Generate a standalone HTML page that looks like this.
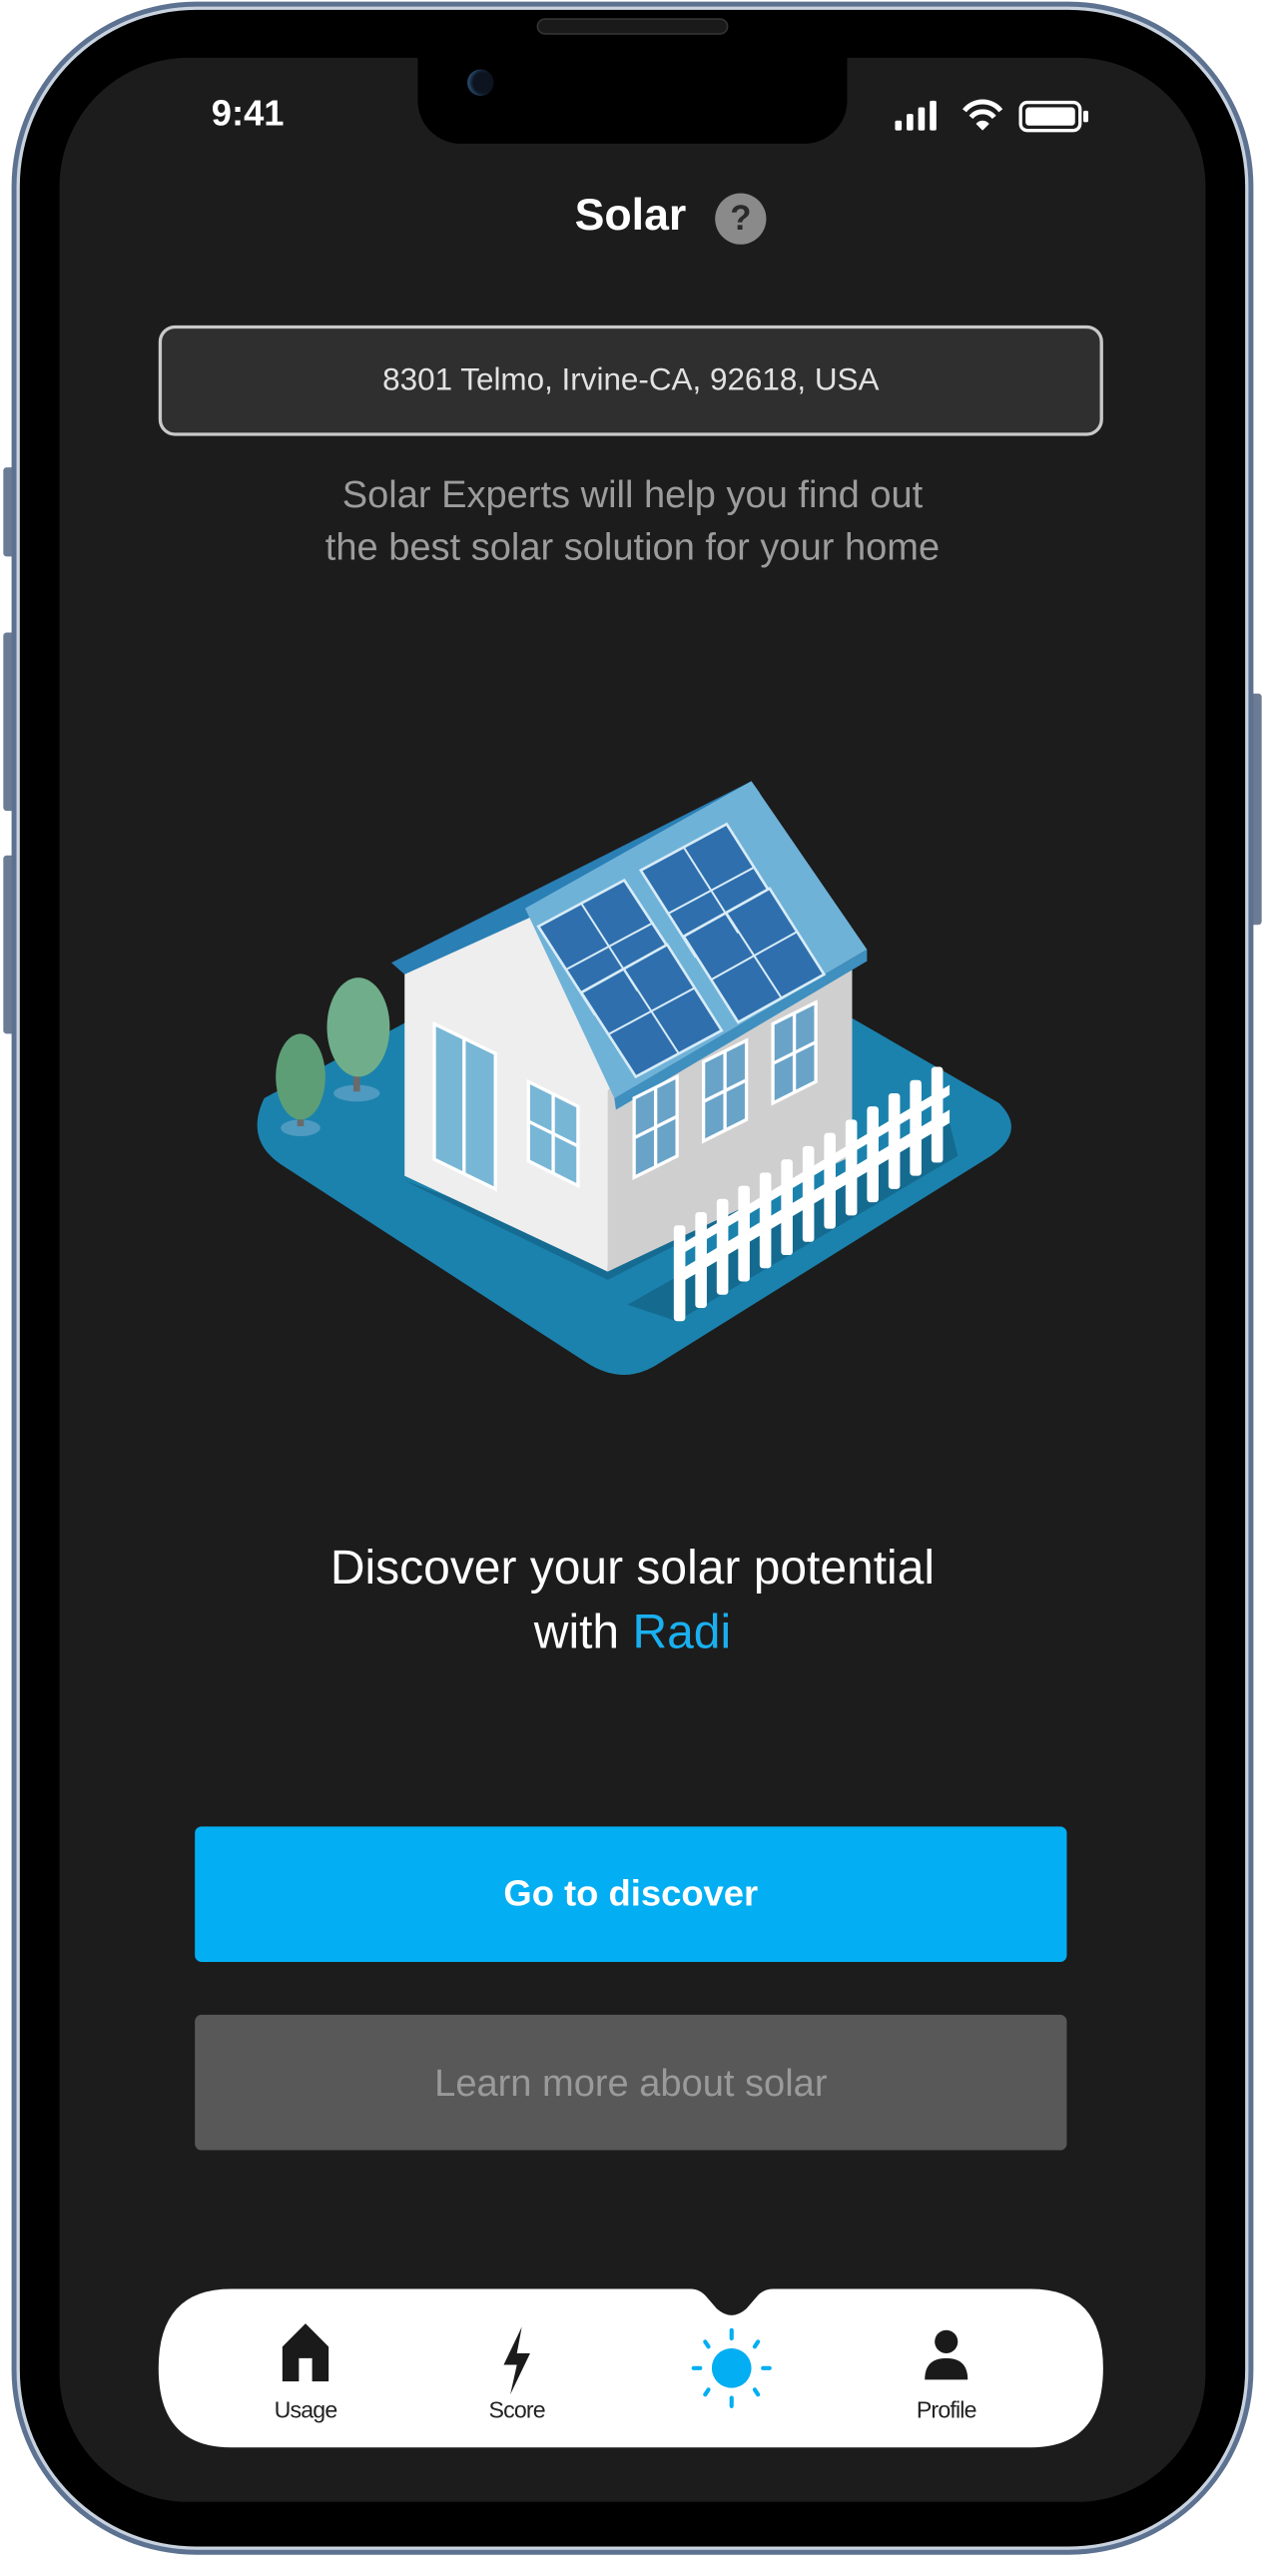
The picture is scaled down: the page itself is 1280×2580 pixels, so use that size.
<!DOCTYPE html>
<html><head><meta charset="utf-8"><style>
*{margin:0;padding:0;box-sizing:border-box}
html,body{width:1280px;height:2580px;overflow:hidden;background:#fff}
#w{position:absolute;left:0;top:0;width:774px;height:1560px;transform:scale(1.654,1.654);transform-origin:0 0;font-family:"Liberation Sans",sans-serif}
.abs{position:absolute}
.c{position:absolute;left:0;width:766px;text-align:center}
</style></head><body><div id="w">
<div class="abs" style="left:2px;top:283px;width:7px;height:54px;background:#6c7c95;border-radius:2px"></div>
<div class="abs" style="left:2px;top:383px;width:7px;height:108px;background:#6c7c95;border-radius:2px"></div>
<div class="abs" style="left:2px;top:518px;width:7px;height:108px;background:#6c7c95;border-radius:2px"></div>
<div class="abs" style="left:757px;top:420px;width:7px;height:140px;background:#6c7c95;border-radius:2px"></div>
<div class="abs" style="left:7px;top:1px;width:752px;height:1546px;border-radius:112px;background:#5d7290;"></div>
<div class="abs" style="left:10px;top:4px;width:746px;height:1540px;border-radius:109px;background:#c9d3e0;"></div>
<div class="abs" style="left:12px;top:6px;width:742px;height:1536px;border-radius:107px;background:#000;"></div>
<div class="abs" style="left:36px;top:35px;width:694px;height:1480px;border-radius:78px;background:#1c1c1c;overflow:hidden"></div>
<div class="abs" style="left:253px;top:30px;width:260px;height:57px;background:#000;border-radius:0 0 26px 26px"></div>
<div class="abs" style="left:325px;top:11px;width:116px;height:10px;background:#1a1a1a;border:1px solid #333;border-radius:5px"></div>
<div class="abs" style="left:283px;top:42px;width:16px;height:16px;background:#0d1420;border-radius:50%;box-shadow:inset 2px 0 2px #2a4a6a"></div>
<div class="abs" style="left:128px;top:56px;color:#fff;font-weight:bold;font-size:22px">9:41</div>
<svg class="abs" style="left:540px;top:58px" width="124" height="24" viewBox="0 0 124 24">
<rect x="2" y="15" width="4" height="6" rx="1" fill="#fff"/><rect x="9" y="11" width="4" height="10" rx="1" fill="#fff"/><rect x="16" y="7" width="4" height="14" rx="1" fill="#fff"/><rect x="23" y="3" width="4" height="18" rx="1" fill="#fff"/>
<path d="M44 9a14 14 0 0 1 22 0" stroke="#fff" stroke-width="3" fill="none"/><path d="M48 13a9 9 0 0 1 14 0" stroke="#fff" stroke-width="3" fill="none"/><path d="M51 17l4 4 4-4a5 5 0 0 0-8 0z" fill="#fff"/>
<rect x="78" y="4" width="36" height="17" rx="4" stroke="#fff" stroke-width="2" fill="none"/><rect x="81" y="7" width="30" height="11" rx="2" fill="#fff"/><rect x="116" y="9" width="3" height="7" rx="1" fill="#fff"/>
</svg>
<div class="abs" style="left:348px;top:115px;color:#fff;font-weight:bold;font-size:27px">Solar</div>
<div class="abs" style="left:433px;top:117px;width:31px;height:31px;border-radius:50%;background:#8a8a8a;color:#2a2a2a;font-weight:bold;font-size:21px;text-align:center;line-height:31px">?</div>
<div class="abs" style="left:96px;top:197px;width:572px;height:67px;border:2px solid #c9c9c9;border-radius:10px;background:#2f2f2f;color:#e2e2e2;font-size:19px;text-align:center;line-height:63px">8301 Telmo, Irvine-CA, 92618, USA</div>
<div class="c" style="top:283px;color:#9c9c9c;font-size:23px;line-height:32px">Solar Experts will help you find out<br>the best solar solution for your home</div>
<svg class="abs" style="left:0;top:0" width="766" height="1560" viewBox="0 0 766 1560">
<path d="M160 665 Q148 690 170 705 L355 825 Q378 840 400 825 L600 700 Q622 685 605 668 L470 590 L300 590 Z" fill="#1b82ad"/>
<path d="M380 790 L575 680 L580 700 L410 800 Z" fill="#146a8f"/>
<path d="M245 715 L368 775 L515 700 L500 690 L368 760 Z" fill="#156b91"/>
<ellipse cx="182" cy="683" rx="12" ry="5" fill="#4f9ac0"/><rect x="180" y="660" width="4" height="22" fill="#6a6a6a"/>
<ellipse cx="182" cy="652" rx="15" ry="26" fill="#5d9e77"/>
<ellipse cx="216" cy="662" rx="14" ry="5" fill="#4f9ac0"/><rect x="214" y="635" width="4" height="26" fill="#6a6a6a"/>
<ellipse cx="217" cy="622" rx="19" ry="30" fill="#70ad8a"/>
<path d="M245 585 L318 545 L372 655 L368 770 L245 712 Z" fill="#eeeeee"/>
<path d="M368 660 L516 582 L516 700 L368 770 Z" fill="#cfcfcf"/>
<path d="M237 583 L455 473 L460 480 L320 556 L245 590 Z" fill="#2a7fb5"/>
<path d="M318 550 L455 473 L525 575 L372 665 Z" fill="#6fb2d8"/>
<path d="M372 665 L525 575 L525 582 L373 672 Z" fill="#3f8fbf"/>
<g fill="#2f6fad" stroke="#d8ecf8" stroke-width="1.6">
<path d="M326 561 L378 533 L412 585 L360 614 Z"/><path d="M352 601 L404 572 L437 624 L385 652 Z"/>
<path d="M388 527 L440 499 L473 551 L421 579 Z"/><path d="M414 567 L466 538 L499 590 L447 619 Z"/>
</g>
<g stroke="#d8ecf8" stroke-width="1.2">
<line x1="352" y1="547" x2="386" y2="600"/><line x1="343" y1="587" x2="395" y2="559"/>
<line x1="378" y1="587" x2="411" y2="638"/><line x1="369" y1="626" x2="421" y2="598"/>
<line x1="414" y1="513" x2="447" y2="565"/><line x1="405" y1="553" x2="457" y2="525"/>
<line x1="440" y1="553" x2="473" y2="604"/><line x1="431" y1="593" x2="483" y2="564"/>
</g>
<path d="M263 620 L300 638 L300 720 L263 702 Z" fill="#78b6d6" stroke="#fff" stroke-width="2"/><line x1="281" y1="629" x2="281" y2="711" stroke="#fff" stroke-width="2"/>
<path d="M320 655 L350 670 L350 718 L320 703 Z" fill="#78b6d6" stroke="#fff" stroke-width="2"/><line x1="335" y1="662" x2="335" y2="710" stroke="#fff" stroke-width="2"/><line x1="320" y1="679" x2="350" y2="694" stroke="#fff" stroke-width="2"/>
<g fill="#6aa3c8" stroke="#fff" stroke-width="2">
<path d="M384 665 L410 652 L410 700 L384 713 Z"/><path d="M426 643 L452 630 L452 678 L426 691 Z"/><path d="M468 620 L494 607 L494 655 L468 668 Z"/>
</g>
<g stroke="#fff" stroke-width="2"><line x1="397" y1="658" x2="397" y2="706"/><line x1="384" y1="689" x2="410" y2="676"/><line x1="439" y1="636" x2="439" y2="684"/><line x1="426" y1="667" x2="452" y2="654"/><line x1="481" y1="613" x2="481" y2="661"/><line x1="468" y1="644" x2="494" y2="631"/></g>
<g fill="#fff">
<path d="M410 770 L575 672 L575 680 L410 778 Z"/><path d="M410 755 L575 657 L575 663 L410 761 Z"/>
<rect x="408" y="742" width="7" height="58" rx="2"/><rect x="421" y="734" width="7" height="58" rx="2"/><rect x="434" y="726" width="7" height="58" rx="2"/><rect x="447" y="718" width="7" height="58" rx="2"/><rect x="460" y="710" width="7" height="58" rx="2"/><rect x="473" y="702" width="7" height="58" rx="2"/><rect x="486" y="694" width="7" height="58" rx="2"/><rect x="499" y="686" width="7" height="58" rx="2"/><rect x="512" y="678" width="7" height="58" rx="2"/><rect x="525" y="670" width="7" height="58" rx="2"/><rect x="538" y="662" width="7" height="58" rx="2"/><rect x="551" y="654" width="7" height="58" rx="2"/><rect x="564" y="646" width="7" height="58" rx="2"/>
</g>
</svg>
<div class="c" style="top:931px;color:#fff;font-size:29px;line-height:39px">Discover your solar potential<br>with <span style="color:#1ab0f0">Radi</span></div>
<div class="abs" style="left:118px;top:1106px;width:528px;height:82px;background:#03aef2;border-radius:4px;color:#fff;font-weight:bold;font-size:22px;text-align:center;line-height:82px">Go to discover</div>
<div class="abs" style="left:118px;top:1220px;width:528px;height:82px;background:#585858;border-radius:4px;color:#9a9a9a;font-size:23px;text-align:center;line-height:82px">Learn more about solar</div>
<svg class="abs" style="left:0;top:0" width="766" height="1560" viewBox="0 0 766 1560">
<path d="M140 1386 L418 1386 Q424 1386 428 1391 L434 1398 Q443 1406 452 1398 L458 1391 Q462 1386 468 1386 L624 1386 Q668 1386 668 1434 Q668 1482 624 1482 L140 1482 Q96 1482 96 1434 Q96 1386 140 1386 Z" fill="#fff"/>
<path d="M171 1421 L185 1407 L199 1421 L199 1442 L189 1442 L189 1428 L181 1428 L181 1442 L171 1442 Z" fill="#1a1a1a"/>
<path d="M316 1409 L305 1432 L313 1432 L309 1450 L321 1425 L313 1425 Z" fill="#1a1a1a"/>
<circle cx="443" cy="1434" r="12" fill="#03aef2"/>
<g stroke="#03aef2" stroke-width="2.5" stroke-linecap="round"><line x1="443" y1="1411" x2="443" y2="1416"/><line x1="443" y1="1452" x2="443" y2="1457"/><line x1="420" y1="1434" x2="424" y2="1434"/><line x1="462" y1="1434" x2="466" y2="1434"/><line x1="427" y1="1418" x2="429" y2="1421"/><line x1="457" y1="1447" x2="459" y2="1450"/><line x1="459" y1="1418" x2="457" y2="1421"/><line x1="429" y1="1447" x2="427" y2="1450"/></g>
<circle cx="573" cy="1418" r="7" fill="#1a1a1a"/><path d="M560 1441 Q560 1428 573 1428 Q586 1428 586 1441 Z" fill="#1a1a1a"/>
</svg>
<div class="abs" style="left:155px;top:1451px;width:60px;text-align:center;font-size:14px;color:#222;letter-spacing:-0.5px">Usage</div>
<div class="abs" style="left:283px;top:1451px;width:60px;text-align:center;font-size:14px;color:#222;letter-spacing:-0.5px">Score</div>
<div class="abs" style="left:543px;top:1451px;width:60px;text-align:center;font-size:14px;color:#222;letter-spacing:-0.5px">Profile</div>
</div></body></html>
